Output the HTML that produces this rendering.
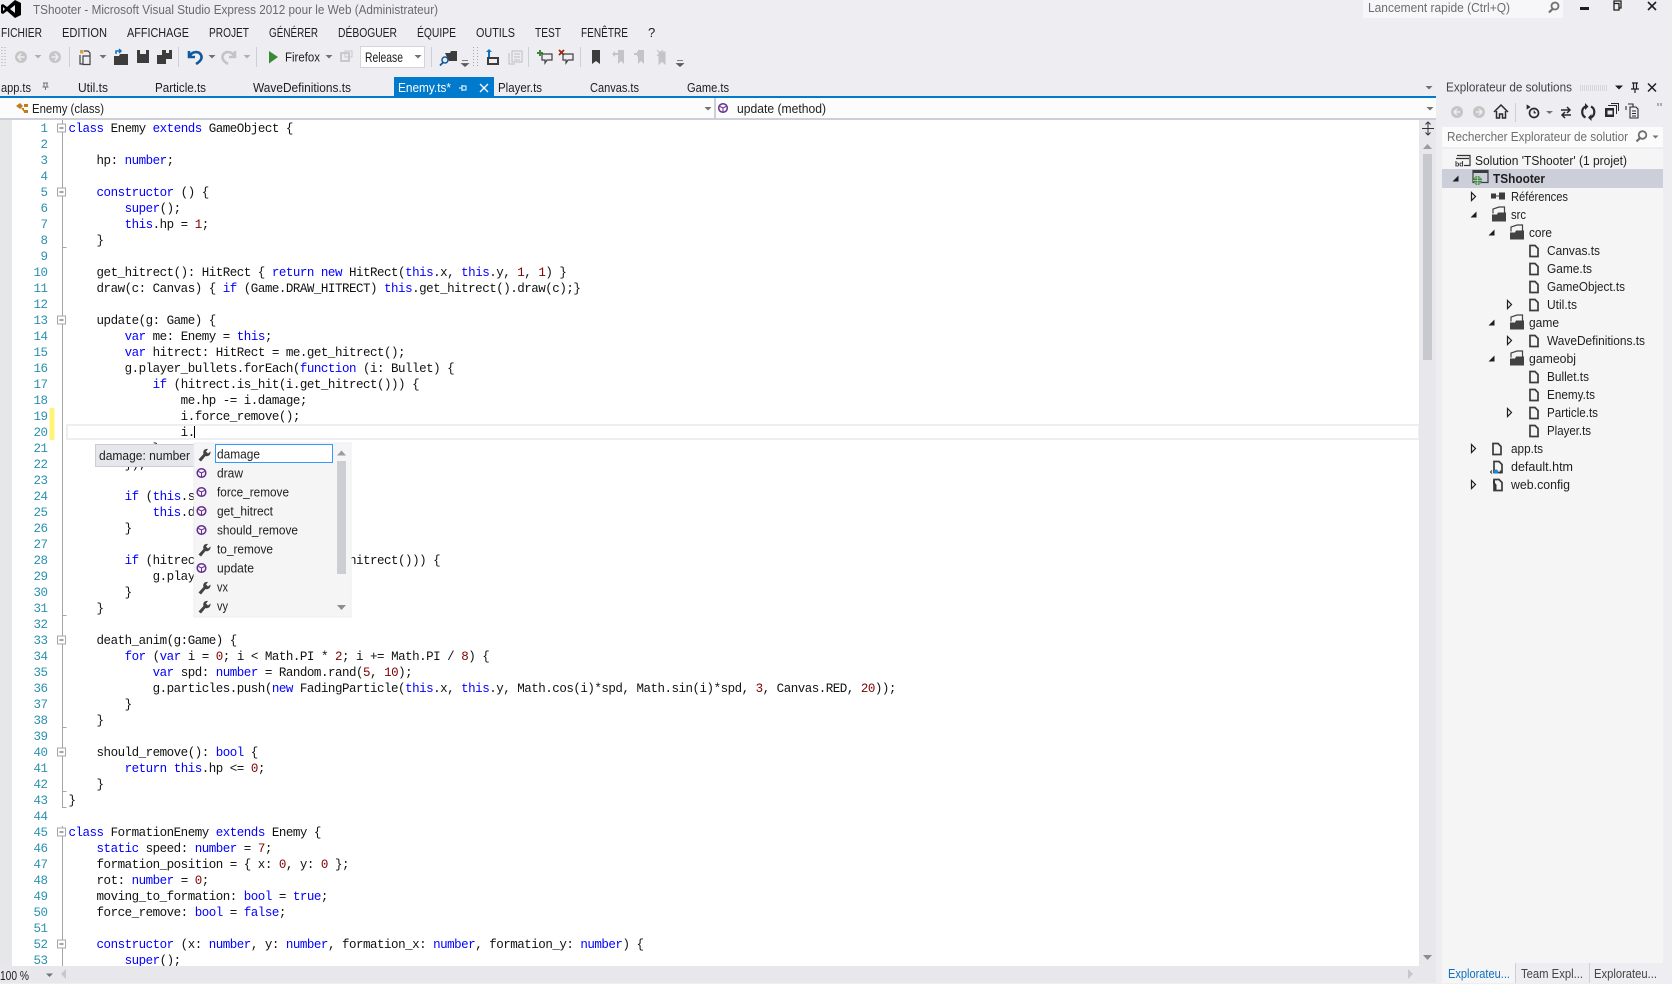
<!DOCTYPE html>
<html><head><meta charset="utf-8"><title>TShooter</title>
<style>
html,body{margin:0;padding:0;width:1672px;height:984px;overflow:hidden;background:#eeeef2}
svg{position:absolute;left:0;top:0}
.t{font-family:"Liberation Sans",sans-serif;font-size:13px;fill:#1e1e1e}
#code,#nums{position:absolute;top:121px;margin:0;font-family:"Liberation Mono",monospace;font-size:12.5px;letter-spacing:-.49px;line-height:16px;white-space:pre;color:#111}
#code{left:68.5px;width:1350px;height:845px;overflow:hidden}
#nums{left:16px;width:31.5px;height:845px;overflow:hidden;text-align:right;color:#2b91af}
#code b{font-weight:normal;color:#0000ff}
#code i{font-style:normal;color:#800000}
</style></head><body>
<svg width="1672" height="984" viewBox="0 0 1672 984" xmlns="http://www.w3.org/2000/svg">
<defs>
<path id="tri" d="M-3.5,-2h7l-3.5,3.5z" fill="#717171"/>
<g id="file"><path d="M-4,-5h5l3,3v8h-8z" fill="#f5f5f5" stroke="#3c3c3c" stroke-width="1.7"/></g>
<g id="folder"><path d="M-6,-1v-4.5l6,-2h5.5v6" fill="none" stroke="#424242" stroke-width="1.2"/><path d="M-7,7v-7h5l1,-2h8v9z" fill="#424242"/></g>
<path id="open" d="M-1.5,-4l4,4l-4,4z" fill="#f5f5f5" stroke="#1e1e1e" stroke-width="1.2"/>
<path id="exp" d="M2.5,-3v6h-6z" fill="#1e1e1e"/>
<g id="wrench"><path d="M-5.5,5.5l5,-5.5c-1,-3 1,-5.5 4.500,-5l-2,2.500l2,2l2.500,-2c.3,3.500 -2.500,5.500 -5,4.500l-4.500,5.500z" fill="#424242"/></g>
<g id="cube"><circle r="4.300" fill="none" stroke="#652d90" stroke-width="1.500"/><path d="M-3,-1.500l3,1.500l3,-1.500M0,0v4" fill="none" stroke="#652d90"/></g>
<g id="fold"><rect x="-4" y="-4" width="8" height="8" fill="#fff" stroke="#a5a5a5"/><path d="M-2,0h4" stroke="#444"/></g>
</defs>
<rect width="1672" height="984" fill="#eeeef2"/>
<!-- logo -->
<path d="M15,0L21,3V15L15,18L7,11L3,14L1,13V5L3,4L7,7ZM15,5L10,9L15,13ZM3,7V11L5,9Z" fill="#000" fill-rule="evenodd"/>
<text class="t" x="33" y="14" style="fill:#6a6a6d" textLength="405" lengthAdjust="spacingAndGlyphs">TShooter - Microsoft Visual Studio Express 2012 pour le Web (Administrateur)</text>
<!-- quick launch -->
<rect x="1363" y="0" width="200" height="18" fill="#f7f7f9"/>
<text class="t" x="1368" y="12" style="fill:#6d6d70" textLength="142" lengthAdjust="spacingAndGlyphs">Lancement rapide (Ctrl+Q)</text>
<circle cx="1555" cy="6" r="3.500" fill="none" stroke="#707070" stroke-width="1.800"/><path d="M1552.500,9l-3.500,3.500" stroke="#707070" stroke-width="2.200"/>
<rect x="1580" y="7" width="9" height="3" fill="#1e1e1e"/>
<path d="M1614,3.500v-2.500h7v7h-2.500M1614,3.500h5v6.500h-5v-6.500z" fill="none" stroke="#1e1e1e" stroke-width="1.300"/>
<path d="M1648,2l8,8M1656,2l-8,8" stroke="#1e1e1e" stroke-width="1.600"/>
<!-- menu -->
<g>
<text class="t" x="1" y="37" textLength="41" lengthAdjust="spacingAndGlyphs">FICHIER</text>
<text class="t" x="62" y="37" textLength="45" lengthAdjust="spacingAndGlyphs">EDITION</text>
<text class="t" x="127" y="37" textLength="62" lengthAdjust="spacingAndGlyphs">AFFICHAGE</text>
<text class="t" x="209" y="37" textLength="40" lengthAdjust="spacingAndGlyphs">PROJET</text>
<text class="t" x="269" y="37" textLength="49" lengthAdjust="spacingAndGlyphs">GÉNÉRER</text>
<text class="t" x="338" y="37" textLength="59" lengthAdjust="spacingAndGlyphs">DÉBOGUER</text>
<text class="t" x="417" y="37" textLength="39" lengthAdjust="spacingAndGlyphs">ÉQUIPE</text>
<text class="t" x="476" y="37" textLength="39" lengthAdjust="spacingAndGlyphs">OUTILS</text>
<text class="t" x="535" y="37" textLength="26" lengthAdjust="spacingAndGlyphs">TEST</text>
<text class="t" x="581" y="37" textLength="47" lengthAdjust="spacingAndGlyphs">FENÊTRE</text>
<text class="t" x="648" y="37">?</text>
</g>
<!-- toolbar -->
<g>
<path d="M2,47v20M5,47v20M473.500,47v20M477.500,47v20" stroke="#a8a8ac" stroke-dasharray="1 2" fill="none"/>
<path d="M69.500,47v20M178.500,47v20M256.500,47v20M431.500,47v20M528.500,47v20M580.500,47v20" stroke="#ccced8" fill="none"/>
<circle cx="21" cy="57" r="6" fill="#c6c6c6"/><path d="M24.500,57h-6M21,53.500l-3,3.500l3,3.500" stroke="#eeeef2" stroke-width="1.500" fill="none"/>
<use href="#tri" x="38" y="57" style="opacity:.5"/>
<circle cx="55" cy="57" r="6" fill="#c6c6c6"/><path d="M51.500,57h6M55,53.500l3,3.500l-3,3.500" stroke="#eeeef2" stroke-width="1.500" fill="none"/>
<rect x="80" y="50" width="3.500" height="3.500" fill="#d8a04a"/>
<path d="M84,51h4l2,2v3M80,55v9h3M83,56h7v8.500h-7z" fill="none" stroke="#424242" stroke-width="1.200"/>
<use href="#tri" x="103" y="57"/>
<path d="M114,56h5l1,-2h8v11h-14z" fill="#3c3c3c"/><path d="M116,54v-3h4M119,49l2,2l-2,2" stroke="#0e70c0" stroke-width="1.500" fill="none"/>
<path d="M137,50h12v13h-12z" fill="#3c3c3c"/><rect x="140" y="50" width="6" height="4" fill="#eeeef2"/>
<path d="M157,55h9v9h-9zM162,50h10v9h-6v-4h-4z" fill="#3c3c3c"/><rect x="166" y="50" width="3" height="3" fill="#eeeef2"/>
<path d="M189,51v6h6M190,56c2,-5 9,-5 11,-1c1.500,3 0,6 -5,9" fill="none" stroke="#0e5a9e" stroke-width="2.600"/>
<use href="#tri" x="212" y="57"/>
<path d="M235,51v6h-6M234,56c-2,-5 -9,-5 -11,-1c-1.500,3 0,6 5,9" fill="none" stroke="#c4c4c6" stroke-width="2.600"/>
<use href="#tri" x="247" y="57" style="opacity:.5"/>
<path d="M269,51l9,6l-9,6.500z" fill="#388a34"/>
<text class="t" x="285" y="61.500" textLength="35" lengthAdjust="spacingAndGlyphs">Firefox</text>
<use href="#tri" x="329" y="57"/>
<rect x="341" y="53" width="8" height="8" fill="none" stroke="#bdbdbf" stroke-width="1.500"/><rect x="345" y="51" width="7" height="6" fill="none" stroke="#c8c8ca"/>
<rect x="360.500" y="46.500" width="64" height="21" fill="#fff" stroke="#d4d5db"/>
<text class="t" x="365" y="62" style="font-size:14px" textLength="38" lengthAdjust="spacingAndGlyphs">Release</text>
<use href="#tri" x="418" y="57"/>
<path d="M445,53h5l1,-2h6v10h-8" fill="#3c3c3c"/><circle cx="445" cy="60" r="3" fill="#eeeef2" stroke="#0e5a9e" stroke-width="1.500"/><path d="M443,62.500l-3,3" stroke="#0e5a9e" stroke-width="1.800"/>
<path d="M462,60.500h6M461.500,63.500l3.500,3l3.500,-3z" fill="#5a5a5a" stroke="#5a5a5a" stroke-width=".8"/>
<path d="M489,49l-3,3h2v5h2v-5h2z" fill="#0e70c0"/><path d="M488,58h10v6h-10z" fill="#eeeef2" stroke="#3c3c3c" stroke-width="2"/>
<path d="M509,53v11h6M512,51h10v11h-10zM514,54h6M514,57h6M514,60h6" fill="none" stroke="#bdbdbf"/>
<path d="M537,53h6M540,50v6" stroke="#388a34" stroke-width="2"/>
<path d="M542,54h10v6h-5l-2,3v-3h-3z" fill="none" stroke="#424242" stroke-width="1.200"/>
<path d="M559,50l5,5M564,50l-5,5" stroke="#a1260d" stroke-width="1.800"/>
<path d="M563,54h10v6h-5l-2,3v-3h-3z" fill="none" stroke="#424242" stroke-width="1.200"/>
<path d="M592,50h8v14l-4,-3l-4,3z" fill="#3c3c3c"/>
<path d="M618,50h6v14l-3,-3l-3,3zM612,54l3,-3v2h3v2h-3v2z" fill="#c4c4c6"/>
<path d="M638,50h6v14l-3,-3l-3,3zM634,53h3v-2l3,3l-3,3v-2h-3z" fill="#c4c4c6"/>
<path d="M659,52h6v12l-3,-3l-3,3zM657,50l6,6M663,50l-6,6" fill="#c4c4c6" stroke="#c4c4c6"/>
<path d="M677,60.500h6M676.500,63.500l3.500,3l3.500,-3z" fill="#5a5a5a" stroke="#5a5a5a" stroke-width=".8"/>
</g>
<!-- tabs -->
<rect x="394" y="77" width="100" height="19" fill="#007acc"/>
<rect x="0" y="96" width="1436" height="2" fill="#007acc"/>
<text class="t" x="1" y="92" textLength="30" lengthAdjust="spacingAndGlyphs">app.ts</text>
<path d="M43,83h5M44,83v4h3v-4M42.500,87h6M45.500,87v3" stroke="#717171" fill="none"/>
<text class="t" x="78" y="92" textLength="30" lengthAdjust="spacingAndGlyphs">Util.ts</text>
<text class="t" x="155" y="92" textLength="51" lengthAdjust="spacingAndGlyphs">Particle.ts</text>
<text class="t" x="253" y="92" textLength="98" lengthAdjust="spacingAndGlyphs">WaveDefinitions.ts</text>
<text class="t" x="398" y="92" style="fill:#fff" textLength="53" lengthAdjust="spacingAndGlyphs">Enemy.ts*</text>
<path d="M462,85v6M462,88h-3M462,86h4v4h-4" stroke="#fff" fill="none"/>
<path d="M480,84l8,8M488,84l-8,8" stroke="#fff" stroke-width="1.300"/>
<text class="t" x="498" y="92" textLength="44" lengthAdjust="spacingAndGlyphs">Player.ts</text>
<text class="t" x="590" y="92" textLength="49" lengthAdjust="spacingAndGlyphs">Canvas.ts</text>
<text class="t" x="687" y="92" textLength="42" lengthAdjust="spacingAndGlyphs">Game.ts</text>
<use href="#tri" x="1429" y="88"/>
<!-- nav bar -->
<rect x="0" y="98" width="1436" height="20" fill="#fcfcfc"/>
<rect x="0" y="118" width="1436" height="2" fill="#ccced8"/>
<rect x="714" y="98" width="2" height="20" fill="#ccced8"/>
<path d="M16,106l4,-3l3,3l-3,3zM24,104h4v3h-4zM24,110h4v3h-4zM21,108h3v4" fill="#c27d1a"/>
<text class="t" x="32" y="113" textLength="72" lengthAdjust="spacingAndGlyphs">Enemy (class)</text>
<use href="#tri" x="708" y="108" transform="translate(0,1)"/>
<use href="#cube" x="723" y="108"/>
<text class="t" x="737" y="113" textLength="89" lengthAdjust="spacingAndGlyphs">update (method)</text>
<use href="#tri" x="1430" y="109"/>
<!-- editor -->
<rect x="12" y="120" width="1407" height="846" fill="#fff"/>
<rect x="0" y="120" width="12" height="846" fill="#e6e7e8"/>
<rect x="49.500" y="408" width="5" height="32" fill="#fff478"/>
<path d="M62.500,120V808M62.500,826V966" stroke="#a5a5a5"/>
<path d="M62.500,247.500h4M62.500,615.500h4M62.500,727.500h4M62.500,791.500h4M62.500,807.500h4" stroke="#a5a5a5"/>
<use href="#fold" x="61.500" y="128"/><use href="#fold" x="61.500" y="192"/><use href="#fold" x="61.500" y="320"/><use href="#fold" x="61.500" y="640"/><use href="#fold" x="61.500" y="752"/><use href="#fold" x="61.500" y="832"/><use href="#fold" x="61.500" y="944"/>
<rect x="67" y="425" width="1352" height="14" fill="#fff" stroke="#eeeef2" stroke-width="2"/>
<!-- vscroll -->
<rect x="1419" y="120" width="17" height="846" fill="#e8e8ec"/>
<rect x="1423" y="154" width="9" height="206" fill="#c8c9cf"/>
<path d="M1422,128.500h12" stroke="#333"/><path d="M1428,122v13M1425.500,124.500l2.500,-2.500l2.500,2.500M1425.500,132.500l2.500,2.500l2.500,-2.500" stroke="#333" fill="none"/>
<path d="M1423,149l4.500,-5l4.500,5z" fill="#9b9ba1"/>
<path d="M1423,955h9l-4.500,5z" fill="#8c8c92"/>
<!-- bottom bar -->
<rect x="0" y="966" width="1436" height="17" fill="#e8e8ec"/>
<text class="t" x="0" y="980" textLength="29" lengthAdjust="spacingAndGlyphs">100 %</text>
<path d="M46,973.500h7l-3.500,3.500z" fill="#717171"/>
<path d="M66,969v10l-5,-5z" fill="#c6c6cc"/>
<path d="M1408,969v10l5,-5z" fill="#c6c6cc"/>
<!-- explorer panel -->
<text class="t" x="1446" y="91.500" textLength="126" lengthAdjust="spacingAndGlyphs" style="fill:#444">Explorateur de solutions</text>
<path d="M1580,86h27M1580,88h27M1580,90h27" stroke="#c0c0c4" stroke-dasharray="1 1"/>
<path d="M1615,85.500h8l-4,4z" fill="#1e1e1e"/>
<path d="M1632,83h6M1633.500,83v6h3v-6M1631,89h8M1635,89v4" stroke="#1e1e1e" fill="none" stroke-width="1.200"/>
<path d="M1648,83.500l8,8M1656,83.500l-8,8" stroke="#1e1e1e" stroke-width="1.500"/>
<circle cx="1457" cy="112" r="6" fill="#c6c6c6"/><path d="M1460,112h-5.500M1457,109l-3,3l3,3" stroke="#eeeef2" stroke-width="1.400" fill="none"/>
<circle cx="1479" cy="112" r="6" fill="#c6c6c6"/><path d="M1476,112h5.500M1479,109l3,3l-3,3" stroke="#eeeef2" stroke-width="1.400" fill="none"/>
<path d="M1494,112l7,-7l7,7M1496.500,111v7h3v-4h3v4h3v-7" fill="none" stroke="#2a2a2a" stroke-width="1.500"/>
<path d="M1515.500,103v19" stroke="#ccced8"/>
<circle cx="1534" cy="113" r="4.500" fill="none" stroke="#2a2a2a" stroke-width="1.700"/><path d="M1534,110.500v2.500h2M1527,105l3,2l-3,2z" stroke="#2a2a2a" fill="#2a2a2a" stroke-width=".7"/>
<path d="M1546,111h7l-3.500,3z" fill="#717171"/>
<path d="M1561,110h9M1567,107l3,3l-3,3M1571,115h-9M1565,112l-3,3l3,3" fill="none" stroke="#2a2a2a" stroke-width="1.500"/>
<path d="M1585.500,117.500a5.500,6 0 0 1 0,-11M1591,106.500a5.500,6 0 0 1 0,11" fill="none" stroke="#2a2a2a" stroke-width="2.200"/><path d="M1585,103v7l3.500,-3.500zM1591.500,121v-7l-3.500,3.500z" fill="#2a2a2a"/>
<path d="M1605,108h9v9h-9z" fill="#2a2a2a"/><rect x="1607.500" y="110.500" width="5" height="4" fill="#eeeef2"/><path d="M1608,105.500h8.500v8.500M1611,103.500h7.500v7.500" stroke="#2a2a2a" fill="none"/>
<path d="M1628,104h5v3M1626,106v4M1630,107h6l2,2v9h-8zM1632,111h4M1632,113.500h4M1632,116h4" stroke="#2a2a2a" fill="none" stroke-width="1.100" />
<path d="M1658,103v3M1661,103v3" stroke="#8a8a8a" stroke-width="1.300"/>
<rect x="1442" y="127" width="221" height="20" fill="#fbfbfb"/>
<text class="t" x="1447" y="141" textLength="181" lengthAdjust="spacingAndGlyphs" style="fill:#6d6d70">Rechercher Explorateur de solutior</text>
<circle cx="1642.500" cy="135" r="3.800" fill="none" stroke="#707070" stroke-width="1.800"/><path d="M1640,138l-3.500,3.500" stroke="#707070" stroke-width="2.200"/>
<path d="M1652.500,135.500h6l-3,3z" fill="#717171"/>
<rect x="1442" y="149" width="221" height="814" fill="#f5f5f5"/>
<rect x="1442" y="169" width="221" height="19" fill="#ccceda"/>
<!-- tree -->
<g transform="translate(0,-.5)">
<path d="M1457,156h13v10h-6M1456,159h13" fill="none" stroke="#333" stroke-width="1.200"/><text x="1455" y="167" font-family="Liberation Sans" font-size="7" font-weight="bold" fill="#333">bd</text>
<text class="t" x="1475" y="165.500" textLength="152" lengthAdjust="spacingAndGlyphs">Solution 'TShooter' (1 projet)</text>
<use href="#exp" x="1456" y="179"/>
<rect x="1473" y="171" width="15" height="12" fill="none" stroke="#3c3c3c" stroke-width="1.200"/><rect x="1473" y="171" width="15" height="2.500" fill="#3c3c3c"/>
<circle cx="1477.500" cy="181" r="4.500" fill="#388a34"/><path d="M1473,181h9M1477.500,176.500v9M1474,178.500h7M1474,183.500h7" stroke="#ccceda" stroke-width=".7"/>
<text class="t" x="1493" y="183.500" textLength="52" lengthAdjust="spacingAndGlyphs" font-weight="bold">TShooter</text>
<use href="#open" x="1473" y="197"/><rect x="1491" y="194" width="5" height="5" fill="#3c3c3c"/><rect x="1499" y="193" width="6" height="7" fill="#3c3c3c"/><path d="M1496,196.500h3" stroke="#3c3c3c"/>
<text class="t" x="1511" y="201.500" textLength="57" lengthAdjust="spacingAndGlyphs">Références</text>
<use href="#exp" x="1474" y="215"/><use href="#folder" x="1499" y="215"/>
<text class="t" x="1511" y="219.500" textLength="15" lengthAdjust="spacingAndGlyphs">src</text>
<use href="#exp" x="1492" y="233"/><use href="#folder" x="1517" y="233"/>
<text class="t" x="1529" y="237.500" textLength="23" lengthAdjust="spacingAndGlyphs">core</text>
<use href="#file" x="1534" y="251"/><text class="t" x="1547" y="255.500" textLength="53" lengthAdjust="spacingAndGlyphs">Canvas.ts</text>
<use href="#file" x="1534" y="269"/><text class="t" x="1547" y="273.500" textLength="45" lengthAdjust="spacingAndGlyphs">Game.ts</text>
<use href="#file" x="1534" y="287"/><text class="t" x="1547" y="291.500" textLength="78" lengthAdjust="spacingAndGlyphs">GameObject.ts</text>
<use href="#open" x="1509" y="305"/><use href="#file" x="1534" y="305"/><text class="t" x="1547" y="309.500" textLength="30" lengthAdjust="spacingAndGlyphs">Util.ts</text>
<use href="#exp" x="1492" y="323"/><use href="#folder" x="1517" y="323"/>
<text class="t" x="1529" y="327.500" textLength="30" lengthAdjust="spacingAndGlyphs">game</text>
<use href="#open" x="1509" y="341"/><use href="#file" x="1534" y="341"/><text class="t" x="1547" y="345.500" textLength="98" lengthAdjust="spacingAndGlyphs">WaveDefinitions.ts</text>
<use href="#exp" x="1492" y="359"/><use href="#folder" x="1517" y="359"/>
<text class="t" x="1529" y="363.500" textLength="47" lengthAdjust="spacingAndGlyphs">gameobj</text>
<use href="#file" x="1534" y="377"/><text class="t" x="1547" y="381.500" textLength="42" lengthAdjust="spacingAndGlyphs">Bullet.ts</text>
<use href="#file" x="1534" y="395"/><text class="t" x="1547" y="399.500" textLength="48" lengthAdjust="spacingAndGlyphs">Enemy.ts</text>
<use href="#open" x="1509" y="413"/><use href="#file" x="1534" y="413"/><text class="t" x="1547" y="417.500" textLength="51" lengthAdjust="spacingAndGlyphs">Particle.ts</text>
<use href="#file" x="1534" y="431"/><text class="t" x="1547" y="435.500" textLength="44" lengthAdjust="spacingAndGlyphs">Player.ts</text>
<use href="#open" x="1473" y="449"/><use href="#file" x="1497" y="449"/><text class="t" x="1511" y="453.500" textLength="32" lengthAdjust="spacingAndGlyphs">app.ts</text>
<use href="#file" x="1498" y="467"/><circle cx="1496" cy="472" r="2" fill="#0e8fe0"/><path d="M1492,471l-1.500,1.500l1.500,1.500M1500,471l1.500,1.500l-1.500,1.500" stroke="#333" fill="none"/>
<text class="t" x="1511" y="471.500" textLength="62" lengthAdjust="spacingAndGlyphs">default.htm</text>
<use href="#open" x="1473" y="485"/><use href="#file" x="1498" y="485"/><path d="M1494,481v3l1.500,1.500v5" stroke="#333" stroke-width="2" fill="none"/>
<text class="t" x="1511" y="489.500" textLength="59" lengthAdjust="spacingAndGlyphs">web.config</text>
</g>
<!-- bottom tabs -->
<rect x="1442" y="963" width="74" height="20" fill="#f5f5f5"/>
<path d="M1515.500,963v20M1589.500,963v20" stroke="#ccced8"/>
<text class="t" x="1448" y="978" style="fill:#0e70c0" textLength="62" lengthAdjust="spacingAndGlyphs">Explorateu...</text>
<text class="t" x="1521" y="978" style="fill:#444" textLength="62" lengthAdjust="spacingAndGlyphs">Team Expl...</text>
<text class="t" x="1594" y="978" style="fill:#444" textLength="63" lengthAdjust="spacingAndGlyphs">Explorateu...</text>
</svg>
<pre id="nums">1
2
3
4
5
6
7
8
9
10
11
12
13
14
15
16
17
18
19
20
21
22
23
24
25
26
27
28
29
30
31
32
33
34
35
36
37
38
39
40
41
42
43
44
45
46
47
48
49
50
51
52
53</pre>
<pre id="code"><b>class</b> Enemy <b>extends</b> GameObject {

    hp: <b>number</b>;

    <b>constructor</b> () {
        <b>super</b>();
        <b>this</b>.hp = <i>1</i>;
    }

    get_hitrect(): HitRect { <b>return</b> <b>new</b> HitRect(<b>this</b>.x, <b>this</b>.y, <i>1</i>, <i>1</i>) }
    draw(c: Canvas) { <b>if</b> (Game.DRAW_HITRECT) <b>this</b>.get_hitrect().draw(c);}

    update(g: Game) {
        <b>var</b> me: Enemy = <b>this</b>;
        <b>var</b> hitrect: HitRect = me.get_hitrect();
        g.player_bullets.forEach(<b>function</b> (i: Bullet) {
            <b>if</b> (hitrect.is_hit(i.get_hitrect())) {
                me.hp -= i.damage;
                i.force_remove();
                i.
            }
        });

        <b>if</b> (<b>this</b>.should_remove()) {
            <b>this</b>.death_anim(g);
        }

        <b>if</b> (hitrect.is_hit(g.player.get_hitrect())) {
            g.player.hit();
        }
    }

    death_anim(g:Game) {
        <b>for</b> (<b>var</b> i = <i>0</i>; i &lt; Math.PI * <i>2</i>; i += Math.PI / <i>8</i>) {
            <b>var</b> spd: <b>number</b> = Random.rand(<i>5</i>, <i>10</i>);
            g.particles.push(<b>new</b> FadingParticle(<b>this</b>.x, <b>this</b>.y, Math.cos(i)*spd, Math.sin(i)*spd, <i>3</i>, Canvas.RED, <i>20</i>));
        }
    }

    should_remove(): <b>bool</b> {
        <b>return</b> <b>this</b>.hp &lt;= <i>0</i>;
    }
}

<b>class</b> FormationEnemy <b>extends</b> Enemy {
    <b>static</b> speed: <b>number</b> = <i>7</i>;
    formation_position = { x: <i>0</i>, y: <i>0</i> };
    rot: <b>number</b> = <i>0</i>;
    moving_to_formation: <b>bool</b> = <b>true</b>;
    force_remove: <b>bool</b> = <b>false</b>;

    <b>constructor</b> (x: <b>number</b>, y: <b>number</b>, formation_x: <b>number</b>, formation_y: <b>number</b>) {
        <b>super</b>();</pre>
<svg width="1672" height="984" viewBox="0 0 1672 984" xmlns="http://www.w3.org/2000/svg" style="pointer-events:none">
<path d="M194.500,426v12" stroke="#000"/>
<rect x="95.500" y="444.500" width="99" height="22" fill="#e6e7ec" stroke="#ccced4"/>
<text class="t" x="99" y="460" textLength="91" lengthAdjust="spacingAndGlyphs">damage: number</text>
<rect x="194" y="443" width="157" height="174" fill="#f5f5f5" stroke="#eeeef2"/>
<rect x="215.500" y="444.500" width="117" height="18" fill="#fff" stroke="#3399ff"/>
<rect x="337" y="461" width="9" height="113" fill="#cdced3"/>
<path d="M337,455.500l4.500,-5l4.500,5z" fill="#9b9ba1"/>
<path d="M337,605h9l-4.500,5z" fill="#8c8c92"/>
<use href="#wrench" x="204" y="454"/>
<use href="#cube" x="201.500" y="473"/>
<use href="#cube" x="201.500" y="492"/>
<use href="#cube" x="201.500" y="511"/>
<use href="#cube" x="201.500" y="530"/>
<use href="#wrench" x="204" y="549"/>
<use href="#cube" x="201.500" y="568"/>
<use href="#wrench" x="204" y="587"/>
<use href="#wrench" x="204" y="606"/>
<text class="t" x="217" y="458.500" textLength="43" lengthAdjust="spacingAndGlyphs">damage</text>
<text class="t" x="217" y="477.500" textLength="26" lengthAdjust="spacingAndGlyphs">draw</text>
<text class="t" x="217" y="496.500" textLength="72" lengthAdjust="spacingAndGlyphs">force_remove</text>
<text class="t" x="217" y="515.500" textLength="56" lengthAdjust="spacingAndGlyphs">get_hitrect</text>
<text class="t" x="217" y="534.500" textLength="81" lengthAdjust="spacingAndGlyphs">should_remove</text>
<text class="t" x="217" y="553.500" textLength="56" lengthAdjust="spacingAndGlyphs">to_remove</text>
<text class="t" x="217" y="572.500" textLength="37" lengthAdjust="spacingAndGlyphs">update</text>
<text class="t" x="217" y="591.500" textLength="11" lengthAdjust="spacingAndGlyphs">vx</text>
<text class="t" x="217" y="610.500" textLength="11" lengthAdjust="spacingAndGlyphs">vy</text>
</svg>
</body></html>
